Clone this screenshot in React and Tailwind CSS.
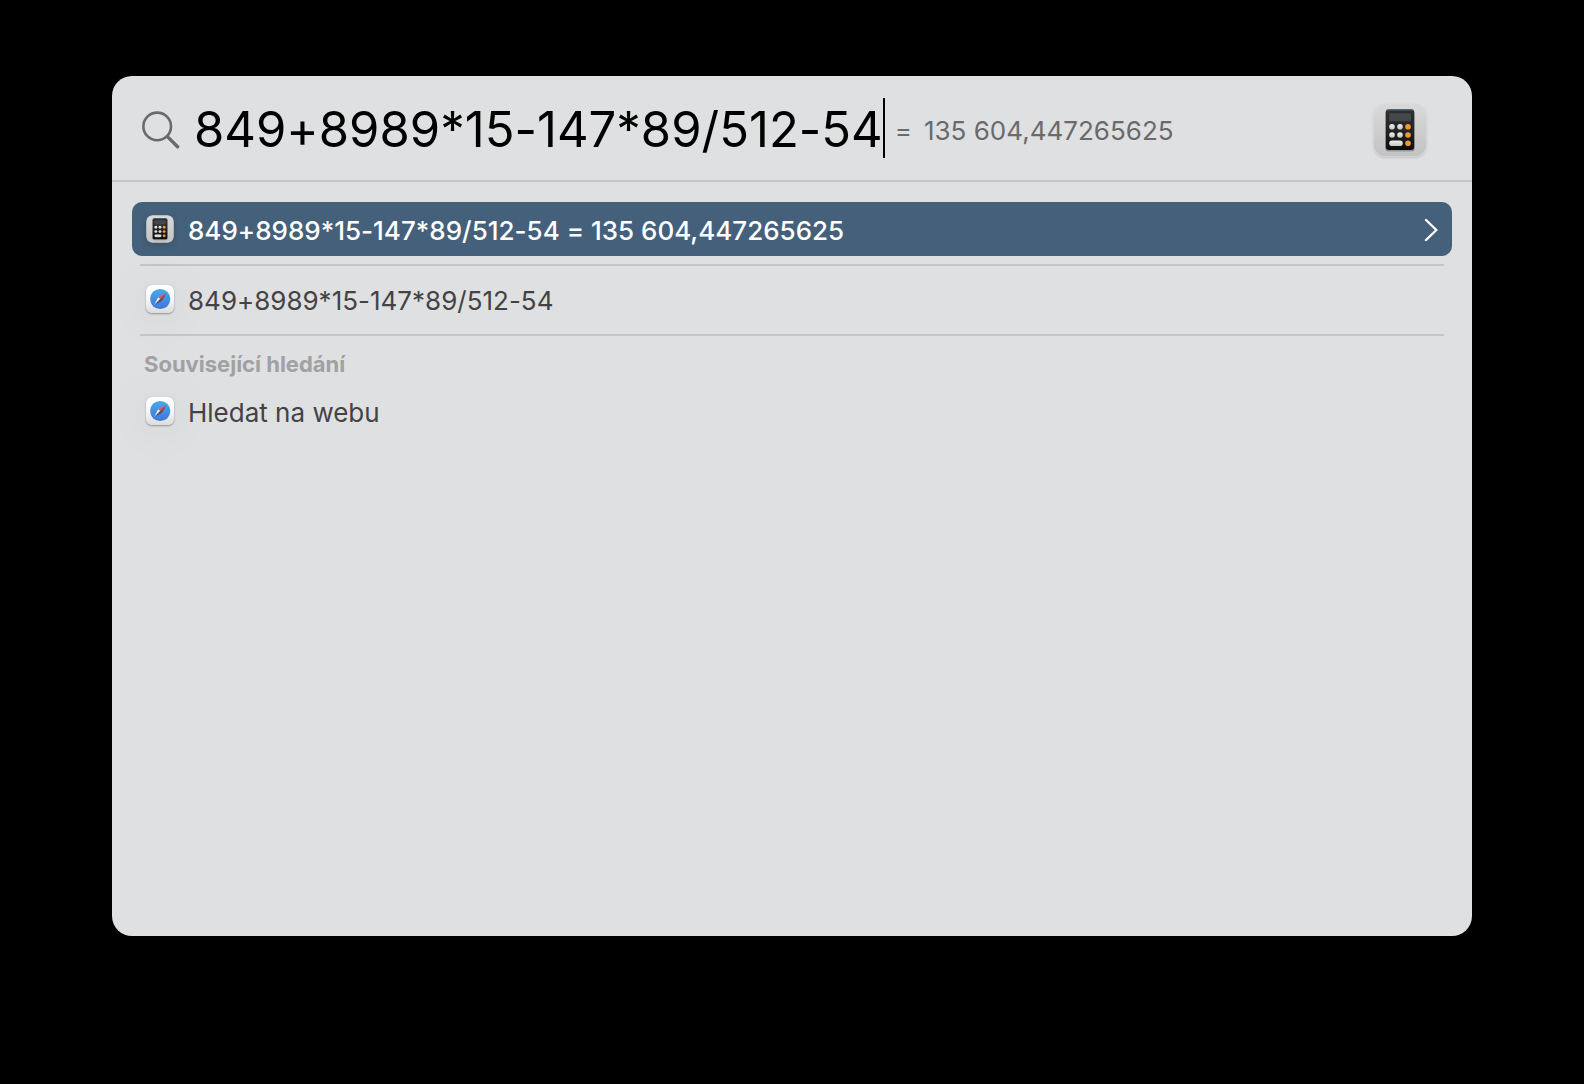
import { useId, useState } from 'react';

const CalculatorIcon = ({ className }) => {
    const id = useId();
    return (
        <svg viewBox="0 0 54 54" className={className} aria-hidden="true">
            <defs>
                <linearGradient id={`${id}-tile`} x1="0" y1="0" x2="0" y2="1">
                    <stop offset="0" stopColor="#d9d9da" />
                    <stop offset="1" stopColor="#c3c3c5" />
                </linearGradient>
                <linearGradient id={`${id}-body`} x1="0" y1="0" x2="0" y2="1">
                    <stop offset="0" stopColor="#5f7180" />
                    <stop offset="0.06" stopColor="#2c2e30" />
                    <stop offset="0.5" stopColor="#252525" />
                    <stop offset="1" stopColor="#0c0c0c" />
                </linearGradient>
                <linearGradient id={`${id}-key`} x1="0" y1="0" x2="0" y2="1">
                    <stop offset="0" stopColor="#f0f0f0" />
                    <stop offset="1" stopColor="#c6c6c6" />
                </linearGradient>
            </defs>
            <rect x="0.5" y="0.5" width="53" height="53" rx="12" fill={`url(#${id}-tile)`} />
            <rect x="12.2" y="7" width="29.6" height="41.5" rx="3.6" fill="#000" opacity="0.22" />
            <rect x="12.8" y="6" width="28.4" height="41" rx="3.2" fill={`url(#${id}-body)`} />
            <rect x="16.2" y="10.3" width="21.8" height="8" rx="1.2" fill="#46494c" />
            {[23.7, 32].map((y) => (
                <g key={y} fill={`url(#${id}-key)`}>
                    <circle cx="19" cy={y} r="2.8" />
                    <circle cx="27" cy={y} r="2.8" />
                </g>
            ))}
            <rect x="16.2" y="37.4" width="13.6" height="5.6" rx="2.8" fill={`url(#${id}-key)`} />
            {[23.7, 32, 40.2].map((y) => (
                <circle key={y} cx="35" cy={y} r="2.8" fill="#ed9a35" />
            ))}
        </svg>
    );
};

const SafariIcon = ({ className }) => {
    const id = useId();
    return (
        <svg viewBox="0 0 28 28" className={className} aria-hidden="true">
            <defs>
                <linearGradient id={`${id}-tile`} x1="0" y1="0" x2="0" y2="1">
                    <stop offset="0" stopColor="#ffffff" />
                    <stop offset="0.5" stopColor="#f7f7f7" />
                    <stop offset="1" stopColor="#dcdcdc" />
                </linearGradient>
                <linearGradient id={`${id}-dial`} x1="0" y1="0" x2="0" y2="1">
                    <stop offset="0" stopColor="#4aa9e6" />
                    <stop offset="1" stopColor="#3c78dc" />
                </linearGradient>
            </defs>
            <rect width="28" height="28" rx="6.4" fill={`url(#${id}-tile)`} />
            <circle cx="14.2" cy="14" r="10.1" fill={`url(#${id}-dial)`} />
            <path d="M20.2 8.2 L12.2 12.2 L14.2 14 Z" fill="#e0574f" />
            <path d="M20.2 8.2 L16.2 15.8 L14.2 14 Z" fill="#8f4250" />
            <path d="M8.2 20 L12.2 12.2 L14.2 14 Z" fill="#f6f6f6" />
            <path d="M8.2 20 L16.2 15.8 L14.2 14 Z" fill="#4d5560" />
        </svg>
    );
};

const SearchIcon = () => (
    <svg viewBox="0 0 38 38" className="size-[38px] shrink-0" fill="none" stroke="#6a6a6b" strokeLinecap="round" aria-hidden="true">
        <circle cx="15.2" cy="15.4" r="13.8" strokeWidth="2.6" />
        <path d="M25.4 25.6 L35.6 35.8" strokeWidth="3.4" />
    </svg>
);

const ResultRow = ({ icon, title, selected }) => (
    <li>
        <button
            type="button"
            className={`flex h-[54px] w-full items-center gap-3.5 rounded-[10px] px-3.5 text-left text-[26px] leading-8 ${
                selected ? 'bg-[#45607a] font-medium text-white' : 'text-[#434344]'
            }`}
        >
            {icon === 'calculator' ? (
                <CalculatorIcon className="size-7 shrink-0 rounded-md shadow-[0_2px_6px_rgba(0,0,0,0.15)]" />
            ) : (
                <SafariIcon className="size-7 shrink-0 rounded-md shadow-[0_1px_2px_rgba(0,0,0,0.35),0_4px_40px_10px_rgba(0,0,0,0.03)]" />
            )}
            <span className="grow pt-1 whitespace-nowrap">{title}</span>
            {selected && (
                <svg viewBox="0 0 14 24" className="h-6 w-3.5 shrink-0" fill="none" stroke="currentColor" strokeWidth="2.4" strokeLinecap="round" strokeLinejoin="round" aria-hidden="true">
                    <path d="M2 3 L12.4 13 L2 23" />
                </svg>
            )}
        </button>
    </li>
);

const Divider = () => <hr className="mx-2 my-2 border-t-2 border-[#c4c5c8]" />;

const App = () => {
    const [query, setQuery] = useState('849+8989*15-147*89/512-54');
    const result = '135 604,447265625';

    return (
        <div className="flex min-h-screen bg-black px-28 pt-[76px] pb-[148px] font-['Inter',sans-serif] [font-feature-settings:'calt'_0]">
            <main className="flex min-w-0 grow flex-col overflow-hidden rounded-[20px] bg-[#dfe0e2]">
                <div className="flex h-[106px] items-center border-b-2 border-[#c4c5c8] pt-1 pr-[45px] pl-[30px]">
                    <SearchIcon />
                    <input
                        type="text"
                        aria-label="Spotlight"
                        value={query}
                        onChange={(e) => setQuery(e.target.value)}
                        className="ml-3.5 field-sizing-content bg-transparent text-[49px] leading-[60px] text-black caret-transparent outline-none"
                    />
                    {/* text cursor */}
                    <span className="mb-1 h-[60px] w-0.5 shrink-0 bg-black" />
                    <output className="ml-2.5 flex grow gap-3 pt-0.5 text-[26px] leading-8 whitespace-nowrap text-[#6a6a6b]">
                        <span>=</span>
                        <span>{result}</span>
                    </output>
                    <CalculatorIcon className="size-[54px] shrink-0 rounded-xl shadow-[0_1px_2px_rgba(0,0,0,0.12)]" />
                </div>

                <div className="px-5 pt-5">
                    <ul>
                        <ResultRow icon="calculator" title={`${query} = ${result}`} selected />
                    </ul>
                    <Divider />
                    <ul className="-mt-0.5">
                        <ResultRow icon="safari" title={query} />
                    </ul>
                    <Divider />
                    <h2 className="px-3 py-1.5 text-[22px] leading-7 font-bold text-[#a0a1a3]">
                        Související hledání
                    </h2>
                    <ul>
                        <ResultRow icon="safari" title="Hledat na webu" />
                    </ul>
                </div>
            </main>
        </div>
    );
};

export default App;
